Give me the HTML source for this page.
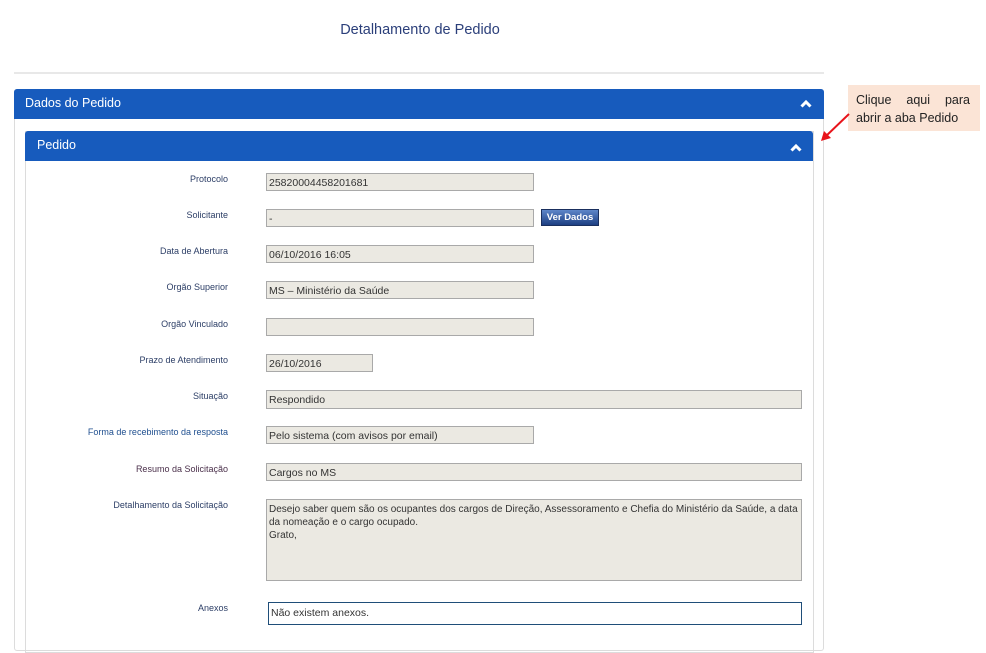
<!DOCTYPE html>
<html><head><meta charset="utf-8"><style>
body{margin:0;width:986px;height:634px;background:#fff;font-family:"Liberation Sans",Arial,sans-serif;position:relative;overflow:hidden}
.a{position:absolute}
.title{left:0;width:840px;top:22px;text-align:center;font-size:14.5px;color:#2b3f7a}
.hr{left:14px;width:810px;top:72px;height:2px;background:#e8e8e8}
.outer{left:14px;top:89px;width:808px;height:560px;border:1px solid #dcdcdc;border-radius:3px}
.h1{left:14px;top:89px;width:810px;height:30px;background:#175bbd;border-radius:3px 3px 0 0;color:#fff;font-size:12.5px;line-height:28px}
.inner{left:25px;top:131px;width:787px;height:520px;border:1px solid #dcdcdc}
.h2{left:25px;top:131px;width:788px;height:30px;background:#175bbd;border-radius:3px 3px 0 0;color:#fff;font-size:12.5px;line-height:29px}
.lbl{left:40px;width:188px;text-align:right;font-size:9px;color:#2c3e66}
.in{background:#ebe9e2;border:1px solid #a9a9a9;box-sizing:border-box;height:18px;font-size:10.5px;color:#333;padding:1px 2px 0;line-height:16px}
.btn{left:541px;top:209px;width:58px;height:17px;background:linear-gradient(#5e86c9,#1d3f83);border:1px solid #1a2f5e;box-sizing:border-box;color:#fff;font-weight:bold;font-size:9.5px;text-align:center;line-height:15px}
.call{left:848px;top:85px;width:132px;height:46px;background:#fbe4d6;font-family:"Liberation Sans",sans-serif;font-size:12.5px;color:#222;box-sizing:border-box;padding:6px 10px 0 8px;line-height:18px;text-align:justify;text-align-last:left}
</style></head><body>
<div class="a title">Detalhamento de Pedido</div>
<div class="a hr"></div>
<div class="a outer"></div>
<div class="a h1"><span style="margin-left:11px">Dados do Pedido</span>
<svg class="a" style="left:786px;top:10px" width="12" height="9"><path d="M1.5 7.5L6 3L10.5 7.5" stroke="#fff" stroke-width="3" fill="none"/></svg></div>
<div class="a inner"></div>
<div class="a h2"><span style="margin-left:12px">Pedido</span>
<svg class="a" style="left:765px;top:12px" width="12" height="9"><path d="M1.5 7.5L6 3L10.5 7.5" stroke="#fff" stroke-width="3" fill="none"/></svg></div>

<div class="a lbl" style="top:174px">Protocolo</div>
<div class="a in" style="left:266px;top:173px;width:268px">25820004458201681</div>
<div class="a lbl" style="top:210px">Solicitante</div>
<div class="a in" style="left:266px;top:209px;width:268px">-</div>
<div class="a btn">Ver Dados</div>
<div class="a lbl" style="top:246px">Data de Abertura</div>
<div class="a in" style="left:266px;top:245px;width:268px">06/10/2016 16:05</div>
<div class="a lbl" style="top:282px">Orgão Superior</div>
<div class="a in" style="left:266px;top:281px;width:268px">MS – Ministério da Saúde</div>
<div class="a lbl" style="top:319px">Orgão Vinculado</div>
<div class="a in" style="left:266px;top:318px;width:268px"></div>
<div class="a lbl" style="top:355px">Prazo de Atendimento</div>
<div class="a in" style="left:266px;top:354px;width:107px">26/10/2016</div>
<div class="a lbl" style="top:391px">Situação</div>
<div class="a in" style="left:266px;top:390px;width:536px;height:19px">Respondido</div>
<div class="a lbl" style="top:427px;color:#1f4f8f">Forma de recebimento da resposta</div>
<div class="a in" style="left:266px;top:426px;width:268px">Pelo sistema (com avisos por email)</div>
<div class="a lbl" style="top:464px;color:#4a2f4a">Resumo da Solicitação</div>
<div class="a in" style="left:266px;top:463px;width:536px">Cargos no MS</div>
<div class="a lbl" style="top:500px">Detalhamento da Solicitação</div>
<div class="a in" style="left:266px;top:499px;width:536px;height:82px;line-height:13px;padding-top:3px;font-size:10px;white-space:nowrap;overflow:hidden">Desejo saber quem são os ocupantes dos cargos de Direção, Assessoramento e Chefia do Ministério da Saúde, a data<br>da nomeação e o cargo ocupado.<br>Grato,</div>
<div class="a lbl" style="top:603px">Anexos</div>
<div class="a in" style="left:268px;top:602px;width:534px;height:23px;background:#fff;border:1px solid #1f4e79;line-height:21px;padding-top:0">Não existem anexos.</div>

<div class="a call">Clique aqui para abrir a aba Pedido</div>
<svg class="a" style="left:818px;top:112px" width="34" height="34"><path d="M31 2L7 25" stroke="#e8141b" stroke-width="2"/><path d="M3 29L6 19L13 26Z" fill="#e8141b"/></svg>
</body></html>
